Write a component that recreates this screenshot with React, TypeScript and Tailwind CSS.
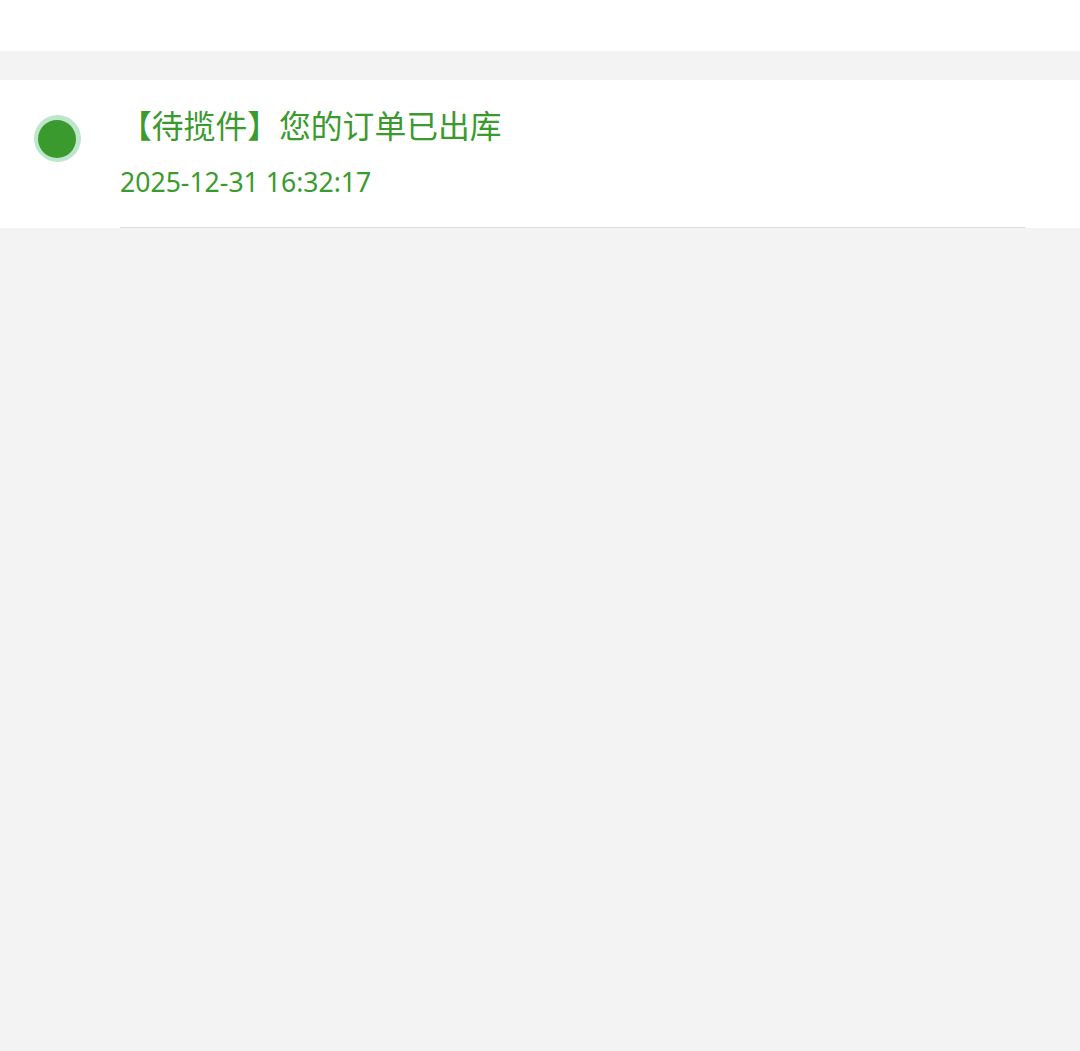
export default function App() {
  return (
    <div className="min-h-[1051px] w-full bg-[#f3f3f3] font-['Noto_Sans','Noto_Sans_CJK_SC',sans-serif]">
      {/* 顶部白条 */}
      <div className="h-[51px] bg-white" />
      <div className="h-[29px]" />

      {/* 物流节点 */}
      <div className="flex bg-white">
        <div className="flex w-[120px] shrink-0 justify-center pt-[35px]">
          <div className="mr-[6px] flex h-[47px] w-[47px] items-center justify-center rounded-full bg-[#bde6cc]">
            <div className="h-[38px] w-[38px] rounded-full bg-[#3a9a2e]" />
          </div>
        </div>
        <div className="mr-[55px] flex-1 border-b border-[#dcdcdc] pt-[22px] pb-[26px]">
          <div className="text-[31.8px] leading-[48px] text-[#3a9a2e]">【待揽件】您的订单已出库</div>
          <div className="mt-[13px] text-[26.6px] leading-[38px] text-[#3a9a2e]">2025-12-31 16:32:17</div>
        </div>
      </div>
    </div>
  );
}
